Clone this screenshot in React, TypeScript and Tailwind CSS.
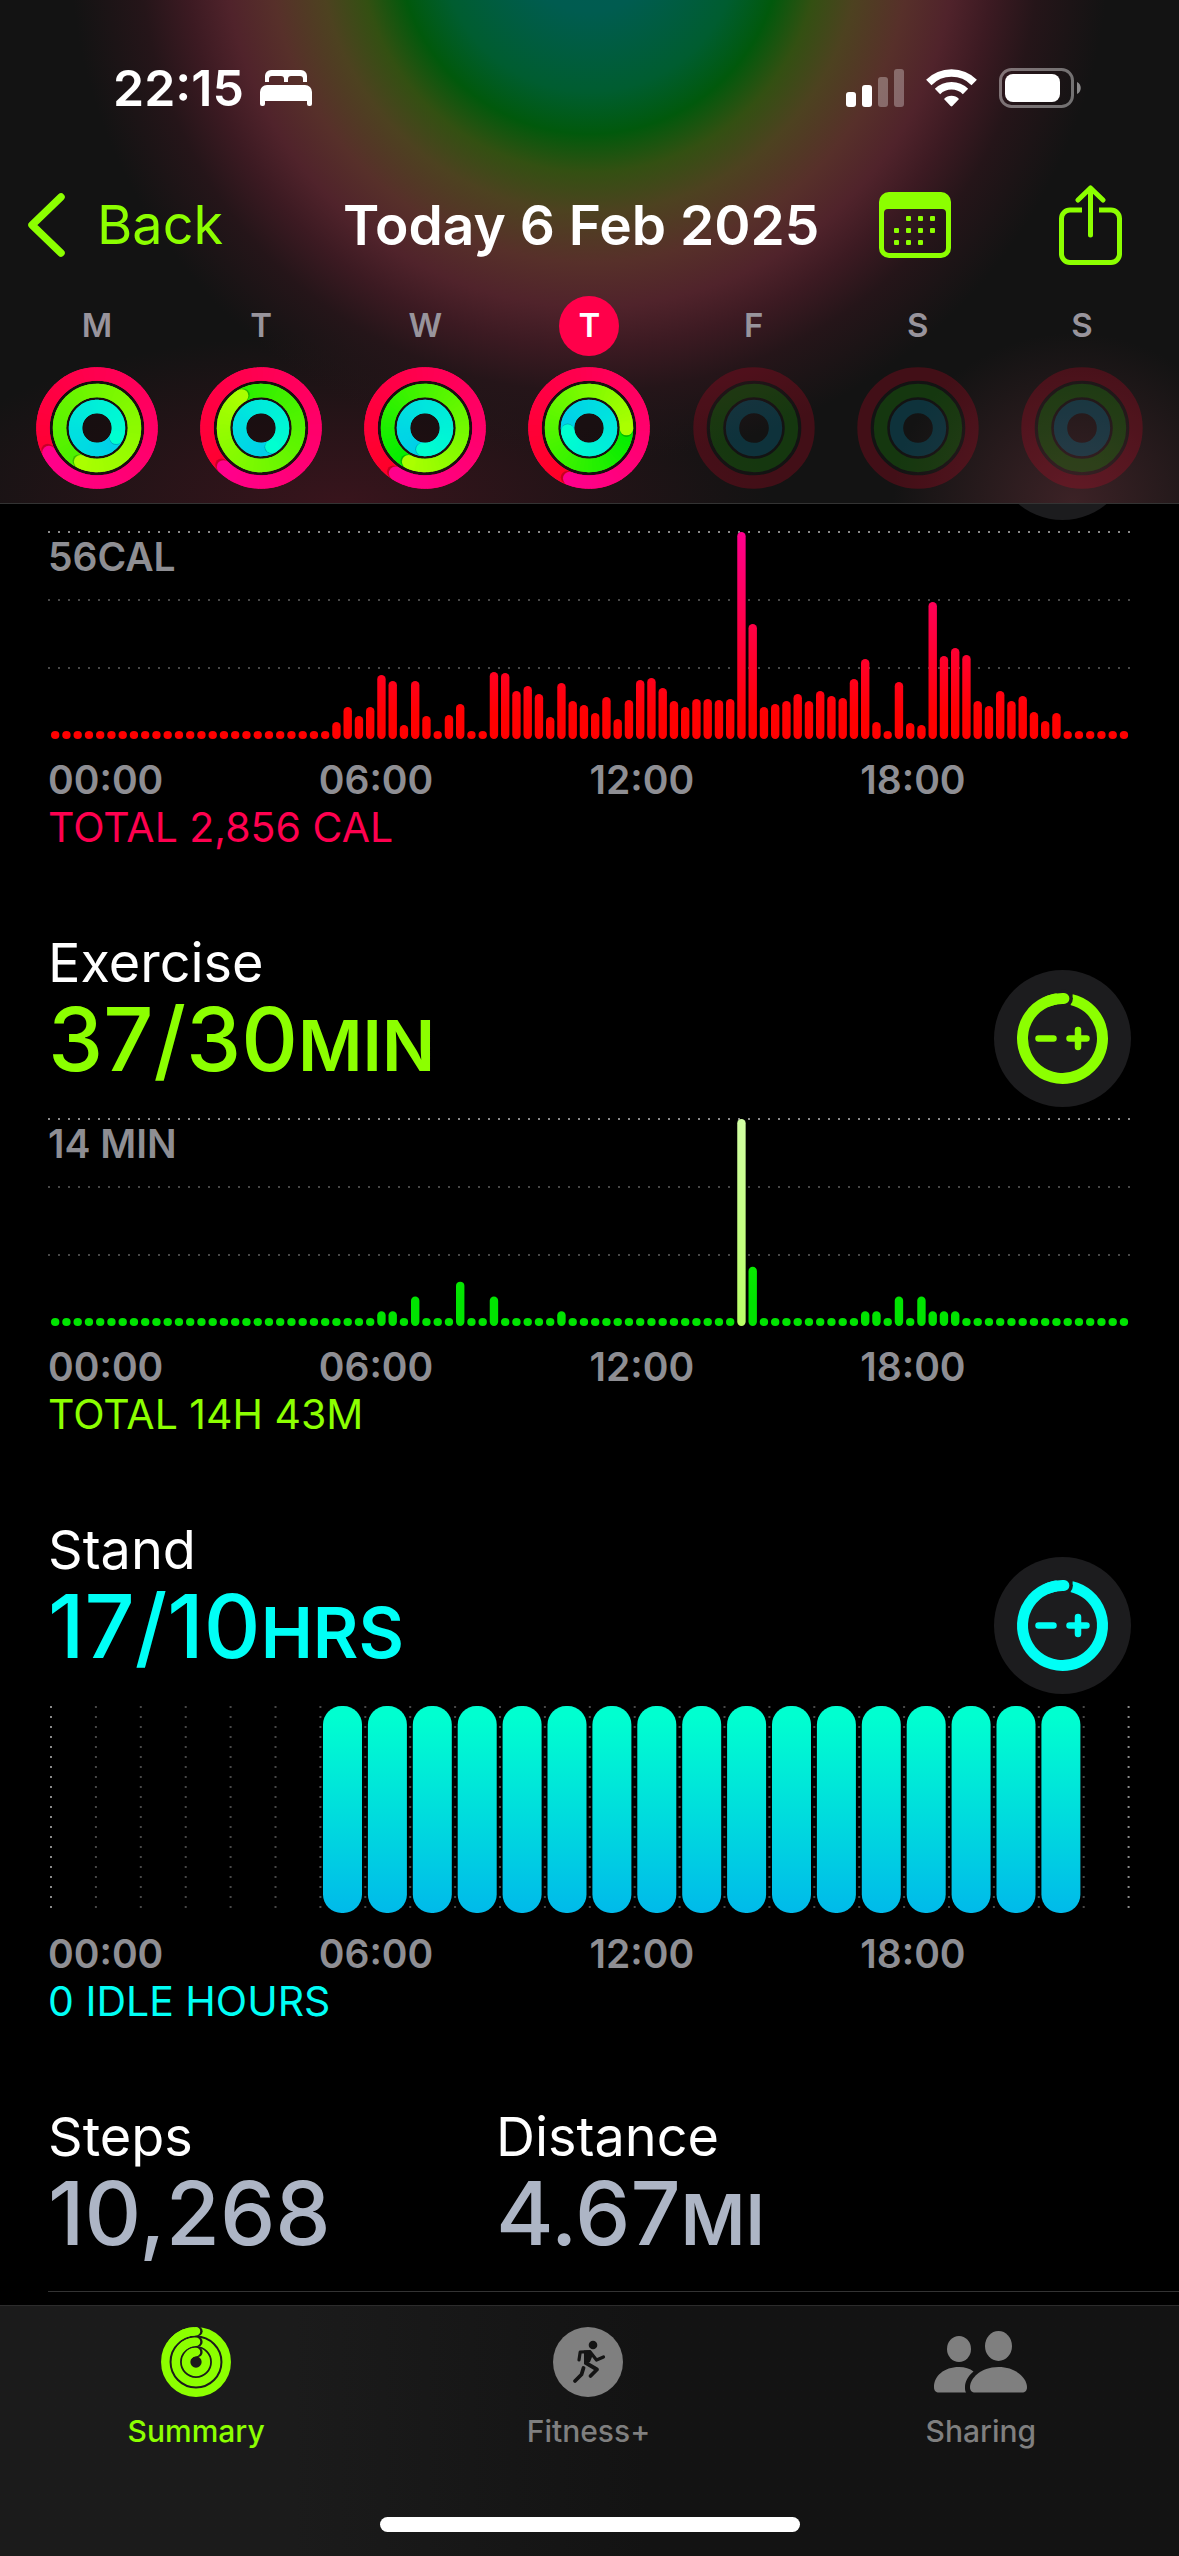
import { useId } from 'react';

interface RingData {
  end: number;
  tail: string;
  head: string;
}

interface Day {
  key: string;
  letter: string;
  today?: boolean;
  rings?: RingData[];
}

const MOVE_HEAD = '#ff008c';
const EXERCISE_HEAD = '#aaff00';
const STAND_HEAD = '#00ffd0';

// end = angle of the ring head in degrees, clockwise from the top
const days: Day[] = [
  { key: 'mon', letter: 'M', rings: [
    { end: 243, tail: '#ff0033', head: MOVE_HEAD },
    { end: 206, tail: '#4cf000', head: EXERCISE_HEAD },
    { end: 116, tail: '#00cdea', head: STAND_HEAD },
  ] },
  { key: 'tue', letter: 'T', rings: [
    { end: 224, tail: '#ff0030', head: MOVE_HEAD },
    { end: 329, tail: '#2aee00', head: EXERCISE_HEAD },
    { end: 150, tail: '#00cdea', head: STAND_HEAD },
  ] },
  { key: 'wed', letter: 'W', rings: [
    { end: 213, tail: '#ff0028', head: MOVE_HEAD },
    { end: 206, tail: '#00ec00', head: EXERCISE_HEAD },
    { end: 186, tail: '#00cdea', head: STAND_HEAD },
  ] },
  { key: 'thu', letter: 'T', today: true, rings: [
    { end: 201, tail: '#ff0024', head: MOVE_HEAD },
    { end: 91, tail: '#00ec00', head: EXERCISE_HEAD },
    { end: 262, tail: '#00cdea', head: STAND_HEAD },
  ] },
  { key: 'fri', letter: 'F' },
  { key: 'sat', letter: 'S' },
  { key: 'sun', letter: 'S' },
];

const RADII = [54, 37.5, 21.5];
const RING_WIDTH = 13.4;
const EMPTY = ['rgba(255,0,40,0.2)', 'rgba(30,200,0,0.2)', 'rgba(0,150,190,0.24)'];

// quarter-hour buckets, bar heights out of 207
const moveBars = [
  ...Array(25).fill(8),
  17, 32, 23, 32, 64, 58, 14, 58, 23, 8, 24, 35, 8, 8, 67, 66, 48, 53, 45, 22, 56, 38, 34,
  26, 42, 20, 39, 59, 61, 51, 38, 32, 40, 40, 39, 40, 207, 115, 32, 35, 38, 45, 38, 48, 43, 41,
  60, 80, 17, 8, 57, 16, 14, 137, 83, 91, 84, 38, 33, 48, 38, 43, 27, 18, 26,
  ...Array(6).fill(8),
];

const exerciseMinutes: Record<number, number> = {
  29: 1, 30: 1, 32: 2, 36: 3, 39: 2, 45: 1, 61: 14, 62: 4, 72: 1, 73: 1, 75: 2, 77: 2, 78: 1, 79: 1, 80: 1,
};
const exerciseBars = Array.from({ length: 96 }, (_, i) => Math.max(8, ((exerciseMinutes[i] ?? 0) / 14) * 207));

function point(r: number, deg: number) {
  const a = (deg * Math.PI) / 180;
  return [r * Math.sin(a), -r * Math.cos(a)];
}

function mix(from: string, to: string, t: number) {
  const ch = (s: string, i: number) => parseInt(s.slice(i, i + 2), 16);
  return `rgb(${[1, 3, 5].map((i) => Math.round(ch(from, i) + (ch(to, i) - ch(from, i)) * t)).join(',')})`;
}

function Ring({ r, data }: { r: number; data: RingData }) {
  const steps = 60;
  const [hx, hy] = point(r, data.end);
  const [sx, sy] = point(r, data.end + 3);
  return (
    <g>
      <circle r={r} fill="none" stroke={mix(data.tail, data.head, 0.5)} strokeWidth={RING_WIDTH} />
      {Array.from({ length: steps }, (_, i) => {
        const a = data.end + (i * 360) / steps;
        const [x1, y1] = point(r, a);
        const [x2, y2] = point(r, a + 360 / steps + (i < steps - 1 ? 1 : 0));
        return (
          <path key={i} d={`M${x1} ${y1}A${r} ${r} 0 0 1 ${x2} ${y2}`} fill="none"
            stroke={mix(data.tail, data.head, i / (steps - 1))} strokeWidth={RING_WIDTH} />
        );
      })}
      <circle cx={sx} cy={sy} r={RING_WIDTH / 2 - 0.4} fill="rgba(0,0,0,0.22)" />
      <circle cx={hx} cy={hy} r={RING_WIDTH / 2} fill={data.head} />
    </g>
  );
}

function DayRings({ rings }: { rings?: RingData[] }) {
  return (
    <svg viewBox="-61 -61 122 122" className="w-[122px] h-[122px]" aria-hidden="true">
      {rings && <circle r={60} fill="rgba(20,12,14,0.6)" />}
      {RADII.map((r, i) => rings
        ? <Ring key={r} r={r} data={rings[i]} />
        : <circle key={r} r={r} fill="none" stroke={EMPTY[i]} strokeWidth={RING_WIDTH} />)}
    </svg>
  );
}

function StatusBar() {
  return (
    <div className="flex items-center justify-between h-[72px] pl-[113px] pr-[98px]">
      <div className="flex items-center gap-4">
        <span className="text-[50px] leading-[60px] font-semibold">22:15</span>
        <svg viewBox="0 0 52 36" className="w-[52px] h-9" fill="#fff" aria-hidden="true">
          <path d="M5 12V6a6 6 0 0 1 6-6h30a6 6 0 0 1 6 6v6h-4V9a3 3 0 0 0-3-3H31a3 3 0 0 0-3 3v3h-4V9a3 3 0 0 0-3-3h-9a3 3 0 0 0-3 3v3z" />
          <path d="M0 22a7 7 0 0 1 7-7h38a7 7 0 0 1 7 7v12a2 2 0 0 1-2 2h-1a2 2 0 0 1-2-2v-3H5v3a2 2 0 0 1-2 2H2a2 2 0 0 1-2-2z" />
        </svg>
      </div>
      <div className="flex items-center gap-[22px]">
        <svg viewBox="0 0 58 38" className="w-[58px] h-[38px]" fill="#fff" aria-hidden="true">
          <rect x="0" y="23" width="10" height="15" rx="3" />
          <rect x="16" y="16" width="10" height="22" rx="3" />
          <rect x="32" y="8" width="10" height="30" rx="3" opacity="0.3" />
          <rect x="48" y="0" width="10" height="38" rx="3" opacity="0.3" />
        </svg>
        <svg viewBox="0 0 51 38" className="w-[51px] h-[38px]" aria-hidden="true">
          <g fill="none" stroke="#fff" strokeWidth="7.6">
            <path d="M2.8 13.5A32 32 0 0 1 48.2 13.5" />
            <path d="M11.5 22.5A20 20 0 0 1 39.5 22.5" />
          </g>
          <path d="M18 30a10.5 10.5 0 0 1 15 0l-6.6 7a1.3 1.3 0 0 1-1.8 0z" fill="#fff" />
        </svg>
        <svg viewBox="0 0 82 40" className="w-[82px] h-10" aria-hidden="true">
          <rect x="1.5" y="1.5" width="72" height="37" rx="11" fill="none" stroke="#fff" strokeOpacity="0.4" strokeWidth="3" />
          <rect x="6" y="6" width="55" height="28" rx="8" fill="#fff" />
          <path d="M78 14c5 2 5 10 0 12z" fill="#fff" fillOpacity="0.5" />
        </svg>
      </div>
    </div>
  );
}

function NavBar() {
  return (
    <nav className="flex items-center h-[84px] pr-[57px] text-[54px] leading-16">
      <button className="flex items-center shrink-0 gap-8 w-[343px] pl-7 text-[#8cff00]">
        <svg viewBox="0 0 37 64" className="w-[37px] h-16" fill="none" stroke="currentColor" strokeWidth="7.5"
          strokeLinecap="round" strokeLinejoin="round" aria-hidden="true">
          <path d="M33 4 4 32l29 28" />
        </svg>
        Back
      </button>
      <h1 className="text-[55px] font-semibold whitespace-nowrap">Today 6 Feb 2025</h1>
      <div className="flex items-center gap-[108px] ml-auto text-[#8cff00]">
        <button aria-label="Calendar">
          <svg viewBox="0 0 72 66" className="w-[72px] h-[66px]" fill="currentColor" aria-hidden="true">
            <path fillRule="evenodd" d="M10 0h52a10 10 0 0 1 10 10v46a10 10 0 0 1-10 10H10A10 10 0 0 1 0 56V10A10 10 0 0 1 10 0zM9 17a4 4 0 0 0-4 4v35a5 5 0 0 0 5 5h52a5 5 0 0 0 5-5V21a4 4 0 0 0-4-4z" />
            {[[1, 2, 3], [0, 1, 2, 3], [0, 1, 2]].map((cols, row) => cols.map((c) => (
              <rect key={`${row}-${c}`} x={15 + c * 12} y={24 + row * 12} width="5" height="5" rx="1" />
            )))}
          </svg>
        </button>
        <button aria-label="Share">
          <svg viewBox="0 0 63 80" className="w-[63px] h-20" fill="none" stroke="currentColor" strokeWidth="5"
            strokeLinecap="round" strokeLinejoin="round" aria-hidden="true">
            <path d="M23 25H11a8.5 8.5 0 0 0-8.5 8.5V69a8.5 8.5 0 0 0 8.5 8.5h41a8.5 8.5 0 0 0 8.5-8.5V33.5A8.5 8.5 0 0 0 52 25H40" strokeLinecap="butt" />
            <path d="M31.5 50V3M19 15 31.5 3 44 15" />
          </svg>
        </button>
      </div>
    </nav>
  );
}

function WeekStrip() {
  return (
    <div className="grid grid-cols-7 px-[15px]">
      {days.map((day) => (
        <button key={day.key} className="flex flex-col items-center gap-[11px]">
          <span className={day.today
            ? 'flex items-center justify-center size-[60px] rounded-full bg-[#ff004a] text-[33px] font-semibold text-white'
            : 'flex items-center justify-center size-[60px] text-[33px] font-semibold text-[#98949c]'}>
            {day.letter}
          </span>
          <DayRings rings={day.rings} />
        </button>
      ))}
    </div>
  );
}

function AdjustButton({ label, className }: { label: string; className: string }) {
  const [hx, hy] = point(40, 2);
  const [tx, ty] = point(40, 13);
  return (
    <button aria-label={label} className={`shrink-0 size-[137px] rounded-full bg-[#1c1c1e] ${className}`}>
      <svg viewBox="-68.5 -68.5 137 137" className="size-[137px]" fill="none" stroke="currentColor" aria-hidden="true">
        <path d={`M${tx} ${ty}A40 40 0 1 1 ${hx} ${hy}`} strokeWidth="11" />
        <circle cx={hx} cy={hy} r="9" fill="#1c1c1e" stroke="none" />
        <path d={`M${point(40, -20).join(' ')}A40 40 0 0 1 ${hx} ${hy}`} strokeWidth="11" strokeLinecap="round" />
        <path d="M-24 0h15M7 0h17M15.5-8.5v17" strokeWidth="6.5" strokeLinecap="round" />
      </svg>
    </button>
  );
}

function BarChart({ bars, top, bottom, peak }: { bars: number[]; top: string; bottom: string; peak?: [string, string] }) {
  const id = useId();
  return (
    <svg viewBox="-1 0 1083 207" className="block w-full overflow-visible" aria-hidden="true">
      <defs>
        <linearGradient id={id} gradientUnits="userSpaceOnUse" x1="0" x2="0" y1="0" y2="207">
          <stop offset="0" stopColor={top} />
          <stop offset="0.88" stopColor={bottom} />
        </linearGradient>
        {peak && (
          <linearGradient id={`${id}-peak`} x1="0" x2="0" y1="0" y2="1">
            <stop offset="0" stopColor={peak[0]} />
            <stop offset="1" stopColor={peak[1]} />
          </linearGradient>
        )}
      </defs>
      {[0, 68, 136].map((y) => (
        <line key={y} x1="-1" x2="1082" y1={y} y2={y} stroke={y === 0 ? '#8a8a8a' : '#484848'} strokeWidth="2" strokeDasharray="2 8" />
      ))}
      {bars.map((h, i) => (
        <rect key={i} x={2 + i * 11.25} y={207 - h} width="8.4" height={h} rx="4.2"
          fill={peak && h > 200 ? `url(#${id}-peak)` : `url(#${id})`} />
      ))}
    </svg>
  );
}

function StandChart() {
  const id = useId();
  return (
    <svg viewBox="-1 0 1083 207" className="block w-full" aria-hidden="true">
      <defs>
        <linearGradient id={id} x1="0" x2="0" y1="0" y2="1">
          <stop offset="0.05" stopColor="#00ffd0" />
          <stop offset="1" stopColor="#00baea" />
        </linearGradient>
      </defs>
      {Array.from({ length: 25 }, (_, i) => (
        <line key={i} x1={2 + i * 44.9} x2={2 + i * 44.9} y1="0" y2="204"
          stroke={i === 0 || i === 24 ? '#8a8a8a' : '#484848'} strokeWidth="2" strokeDasharray="2 8" />
      ))}
      {Array.from({ length: 17 }, (_, i) => (
        <rect key={i} x={274 + i * 44.9} y="0" width="39" height="207" rx="18.5" fill={`url(#${id})`} />
      ))}
    </svg>
  );
}

function Axis({ total, className }: { total: string; className: string }) {
  return (
    <>
      <div className="grid grid-cols-4 mt-[18px] text-[39px] leading-[46px] font-semibold text-[#8e8e93]">
        <span>00:00</span>
        <span>06:00</span>
        <span>12:00</span>
        <span>18:00</span>
      </div>
      <p className={`text-[41px] leading-12 ${className}`}>{total}</p>
    </>
  );
}

function Heading({ title, value, unit, className }: { title: string; value: string; unit?: string; className: string }) {
  return (
    <div>
      <h2 className="text-[54px] leading-16">{title}</h2>
      <p className={`text-[88px] leading-[88px] font-medium ${className}`}>
        {value}
        {unit && <span className="text-[70px] leading-none font-semibold">{unit}</span>}
      </p>
    </div>
  );
}

function ChartLabel({ children }: { children: string }) {
  return <span className="absolute left-0 top-0.5 text-[39px] leading-[46px] font-semibold text-[#8e8e93]">{children}</span>;
}

function TabBar() {
  return (
    <footer className="border-t border-[#2c2c2c] bg-linear-to-r from-[#1b1b1b] from-25% to-[#131313] to-55% pb-6">
      <div className="grid grid-cols-3 pt-[21px] pr-0.5 text-[30px] leading-9 font-medium text-[#7f7f7f]">
        <button className="flex flex-col items-center gap-4 text-[#8cff00]">
          <svg viewBox="-35 -35 70 70" className="size-[70px]" fill="none" stroke="currentColor" strokeWidth="8.5" aria-hidden="true">
            {[30.7, 20.2, 9.9].map((r) => {
              const [x, y] = point(r, 0);
              return (
                <g key={r}>
                  <circle r={r} />
                  <circle cx={x + 1.6} cy={y} r="5" fill="#1b1b1b" stroke="none" />
                  <path d={`M${point(r, -50).join(' ')}A${r} ${r} 0 0 1 ${x} ${y}`} strokeLinecap="round" />
                </g>
              );
            })}
          </svg>
          Summary
        </button>
        <button className="flex flex-col items-center gap-4">
          <svg viewBox="0 0 70 70" className="size-[70px]" aria-hidden="true">
            <circle cx="35" cy="35" r="35" fill="#7f7f7f" />
            <circle cx="40" cy="18" r="4.3" fill="#141414" />
            <path d="M31 23.5h6.5l2.5 4-3 7.5-6 2.5z" fill="#141414" />
            <g fill="none" stroke="#141414" strokeLinecap="round" strokeLinejoin="round">
              <path d="M26 33l1.2-8L37 24.7l6.5 8.3 7-3" strokeWidth="3.2" />
              <path d="M33 36l11 6.5-6.5 6.5" strokeWidth="3.8" />
              <path d="M30.5 41l-2 6.5-6.5 6.5" strokeWidth="3.8" />
            </g>
          </svg>
          Fitness+
        </button>
        <button className="flex flex-col items-center gap-4">
          <svg viewBox="0 0 94 70" className="w-[94px] h-[70px]" fill="currentColor" aria-hidden="true">
            <ellipse cx="25" cy="22" rx="12" ry="13" />
            <ellipse cx="64.5" cy="19" rx="13.5" ry="15" />
            <path d="M0 60C0 49 10 40 25 40c6 0 11 1.500 14.500 4.500C34 49 31 55 31 60c0 2 0 4 1 5.500H5C2 65.500 0 64 0 60z" />
            <path d="M36 60c0-8 10-20 28.500-20S93 52 93 60c0 4-2 5.500-5 5.500H41c-3 0-5-1.500-5-5.500z" />
          </svg>
          Sharing
        </button>
      </div>
      <div className="mx-auto mt-[68px] h-[15px] w-[420px] rounded-full bg-white" />
    </footer>
  );
}

export default function App() {
  return (
    <div className="flex flex-col min-h-screen bg-black text-white font-['Inter',sans-serif]">
      <header className="flex flex-col pt-[52px] pb-[14px] border-b border-[#333] bg-[#131313] bg-[radial-gradient(circle_at_50%_-58px,#005c54_0,#005c50_70px,#005d30_150px,#01590c_192px,#335012_230px,#4d4220_270px,#57302a_320px,#50232b_365px,#3c1a22_405px,#251519_450px,#13131300_520px),radial-gradient(ellipse_430px_170px_at_29%_100%,#38141c,#38141c00),radial-gradient(ellipse_180px_170px_at_91%_100%,#3c2226,#3c222600)]">
        <StatusBar />
        <div className="mt-[59px]">
          <NavBar />
        </div>
        <div className="mt-[29px]">
          <WeekStrip />
        </div>
      </header>

      <main className="flex-1 pl-12">
        <section className="pr-12">
          <div className="flex items-end justify-end h-4 overflow-hidden">
            <AdjustButton label="Change move goal" className="text-[#1c1c1e]" />
          </div>
          <div className="relative mt-3">
            <BarChart bars={moveBars} top="#ff0090" bottom="#ff0000" />
            <ChartLabel>56CAL</ChartLabel>
          </div>
          <Axis total="TOTAL 2,856 CAL" className="text-[#ff004f]" />
        </section>

        <section className="mt-20 pr-12">
          <div className="flex items-end justify-between h-44">
            <div className="self-start">
              <Heading title="Exercise" value="37/30" unit="MIN" className="text-[#8cff00]" />
            </div>
            <AdjustButton label="Change exercise goal" className="text-[#8cff00]" />
          </div>
          <div className="relative mt-3">
            <BarChart bars={exerciseBars} top="#30ff00" bottom="#00e400" peak={['#d2ffa4', '#b9ff66']} />
            <ChartLabel>14 MIN</ChartLabel>
          </div>
          <Axis total="TOTAL 14H 43M" className="text-[#8cff00]" />
        </section>

        <section className="mt-20 pr-12">
          <div className="flex items-end justify-between h-44">
            <div className="self-start">
              <Heading title="Stand" value="17/10" unit="HRS" className="text-[#00fff6]" />
            </div>
            <AdjustButton label="Change stand goal" className="text-[#00fff6]" />
          </div>
          <div className="mt-3">
            <StandChart />
          </div>
          <Axis total="0 IDLE HOURS" className="text-[#00fff6]" />
        </section>

        <section className="grid grid-cols-[448px_1fr] mt-20 pb-[34px] border-b border-[#333]">
          <Heading title="Steps" value="10,268" className="text-[#adb5c5]" />
          <Heading title="Distance" value="4.67" unit="MI" className="text-[#adb5c5]" />
        </section>
      </main>

      <TabBar />
    </div>
  );
}
